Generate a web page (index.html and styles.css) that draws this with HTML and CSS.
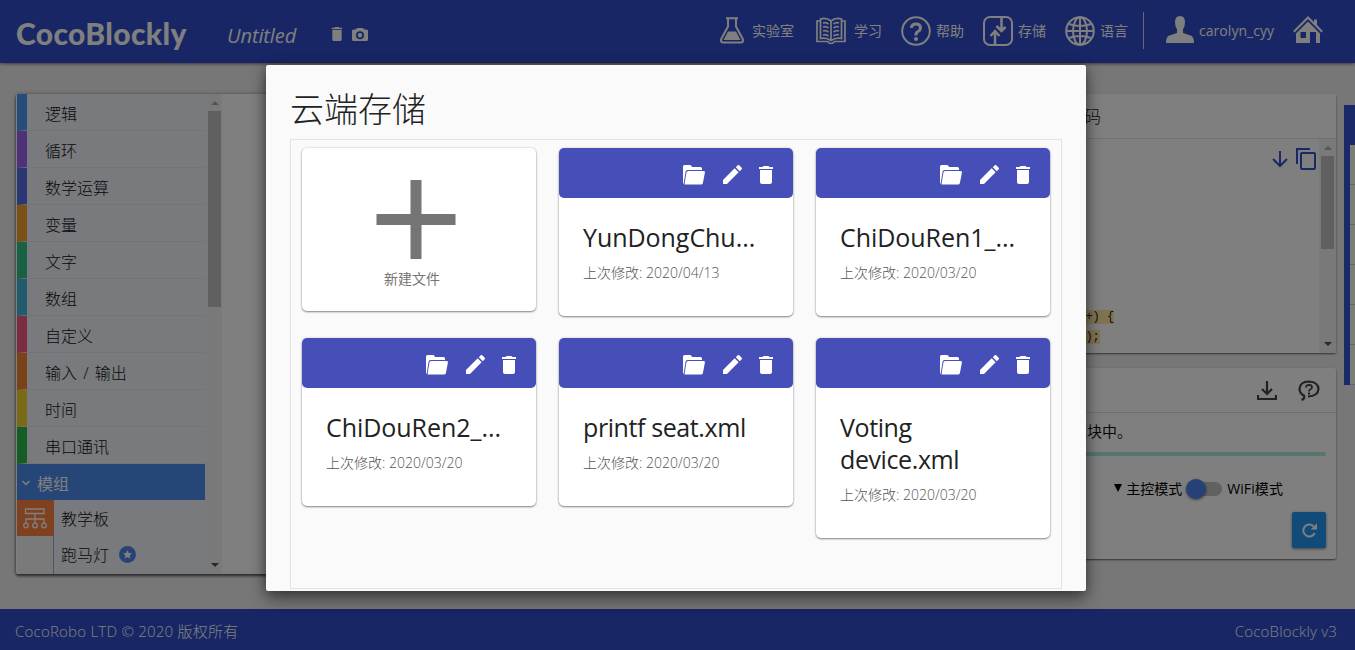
FILE: index.html
```html
<!DOCTYPE html>
<html lang="zh-CN">
<head>
<meta charset="utf-8">
<title>CocoBlockly</title>
<link rel="stylesheet" href="styles.css">
</head>
<body>
<svg class="sprite" width="0" height="0">
  <symbol id="folder" viewBox="0 0 22 20"><path d="M0 19V1.500Q0 0 1.500 0H7Q8.500 0 9 2H17.500Q19 2 19 3.500V5H4.500Q3 5 2.600 6.500L.8 18Z"/><path d="M5 6H20.500Q22.200 6 21.900 7.600L19.900 18Q19.600 19.500 18 19.500H1.500L3.400 7.500Q3.700 6 5 6Z"/></symbol>
  <symbol id="pencil" viewBox="3 3 18 18"><path d="M3 17.250V21h3.750L17.810 9.940l-3.750-3.750L3 17.250zM20.710 7.040a1 1 0 0 0 0-1.410l-2.340-2.340a1 1 0 0 0-1.410 0l-1.830 1.830 3.750 3.750 1.830-1.830z"/></symbol>
  <symbol id="trash" viewBox="5 3 14 18"><path d="M6 19c0 1.100.9 2 2 2h8c1.100 0 2-.9 2-2V7H6v12zM19 4h-3.500l-1-1h-5l-1 1H5v2h14V4z"/></symbol>
</svg>

<header class="topbar">
  <div class="logo">CocoBlockly</div>
  <div class="project-name">Untitled</div>
  <svg class="tool-trash" viewBox="5 3 14 18"><use href="#trash" x="5" y="3" width="14" height="18"/></svg>
  <svg class="tool-camera" viewBox="0 0 16 13"><path fill-rule="evenodd" d="M5 0h6l1.300 1.500H14.500Q16 1.500 16 3V11.500Q16 13 14.500 13H1.500Q0 13 0 11.500V3Q0 1.500 1.500 1.500H3.700ZM8 3.200a4 4 0 1 0 0 8a4 4 0 1 0 0-8ZM8 5a2.200 2.200 0 1 1 0 4.400a2.200 2.200 0 1 1 0-4.400Z"/></svg>
  <nav class="nav">
    <a class="nav-item nav-lab"><svg width="24" height="27" viewBox="0 0 24 27"><g class="line"><path d="M6 1.200H18M8 1.500V9.500L1.500 21.500Q-.3 25.500 3.500 25.500H20.500Q24.300 25.500 22.500 21.500L16 9.500V1.500"/></g><path d="M8 14.500H16L20.500 23H3.500Z"/></svg><span>实验室</span></a>
    <a class="nav-item nav-learn"><svg width="30" height="28" viewBox="0 0 30 28"><g class="line thin"><path d="M4 4H1V24.500H11.500Q13 26.500 15 26.500T18.500 24.500H29V4H26"/><path d="M15 4Q10 0 4.500 2V21.500Q10 20 15 23.500Q20 20 25.500 21.500V2Q20 0 15 4V23M7 6Q10 5 12.500 7M7 10Q10 9 12.500 11M7 14Q10 13 12.500 15M7 18Q10 17 12.500 19M23 6Q20 5 17.500 7M23 10Q20 9 17.500 11M23 14Q20 13 17.500 15M23 18Q20 17 17.500 19"/></g></svg><span>学习</span></a>
    <a class="nav-item nav-help"><svg width="30" height="30" viewBox="0 0 30 30"><g class="line"><circle cx="15" cy="15" r="13.800"/><path class="bold" d="M10.500 12Q10.500 8 15 8T19.500 12Q19.500 14 17 15.500T15 19.500"/></g><circle cx="15" cy="23" r="2"/></svg><span>帮助</span></a>
    <a class="nav-item nav-store"><svg width="30" height="30" viewBox="0 0 30 30"><g class="line"><rect x="1" y="1" width="28" height="28" rx="6"/><path class="arrow" d="M18.500 1V14M13.500 10L18.500 15L22.500 11M12 29V15.500M7.500 20L12 15L16.500 20"/></g></svg><span>存储</span></a>
    <a class="nav-item nav-lang"><svg width="30" height="30" viewBox="0 0 30 30"><g class="line"><circle cx="15" cy="15" r="13.800"/><ellipse cx="15" cy="15" rx="7" ry="13.800"/><path d="M15 1V29M1 15H29M4 8Q15 12 26 8M4 22Q15 18 26 22"/></g></svg><span>语言</span></a>
    <i class="divider"></i>
    <a class="nav-item nav-user"><svg width="28" height="27" viewBox="0 0 28 27"><path d="M14 0Q19 0 19 6Q19 11 17 13.500V17L24.500 19.500Q28 20.500 28 27H0Q0 20.500 3.500 19.500L11 17V13.500Q9 11 9 6Q9 0 14 0Z"/></svg><span>carolyn_cyy</span></a>
    <a class="nav-item nav-home"><svg width="30" height="27" viewBox="0 0 30 27"><path d="M15 0L21 6V3.500H24V9L30 15L28.500 16.500L15 3L1.500 16.500L0 15Z"/><path fill-rule="evenodd" d="M15 5.500L27 17.500V27H23V16H17V27H3V17.500ZM7.500 16V22H13V16Z"/></svg></a>
  </nav>
</header>

<main class="stage">
  <section class="workspace">
    <div class="toolbox">
      <div class="cat logic">逻辑</div>
      <div class="cat loop">循环</div>
      <div class="cat math">数学运算</div>
      <div class="cat vars">变量</div>
      <div class="cat text">文字</div>
      <div class="cat array">数组</div>
      <div class="cat custom">自定义</div>
      <div class="cat io">输入 / 输出</div>
      <div class="cat time">时间</div>
      <div class="cat serial">串口通讯</div>
      <div class="cat-open"><svg width="8" height="6" viewBox="0 0 8 6"><path d="M.5 1L4 4.500L7.500 1"/></svg>模组</div>
      <div class="sub"><span class="sub-icon"><svg width="24" height="21" viewBox="0 0 24 21"><path d="M2.500 1H21V5.500H2.500ZM12 5.500V15M3 15V11H21V15"/><circle cx="3" cy="17.500" r="2.300"/><circle cx="12" cy="17.500" r="2.300"/><circle cx="21" cy="17.500" r="2.300"/></svg></span><span class="sub-name">教学板</span></div>
      <div class="sub last"><span class="sub-line"></span>跑马灯<svg class="star" width="17" height="17" viewBox="0 0 17 17"><circle cx="8.500" cy="8.500" r="8.500"/><path d="M8.500 4L9.800 7L13 7.300L10.600 9.400L11.300 12.600L8.500 10.900L5.700 12.600L6.400 9.400L4 7.300L7.200 7Z"/></svg></div>
    </div>
    <div class="scroll scroll-left"><i class="up"></i><i class="thumb"></i><i class="down"></i></div>
  </section>
  <div class="side">
    <section class="panel code-panel">
      <div class="panel-head code-head">代码</div>
      <div class="code-body">
        <div class="code">
          <div class="code-tools"><svg width="16" height="17" viewBox="0 0 16 17"><path d="M8 0V15M1 8L8 15L15 8"/></svg><svg width="20" height="22" viewBox="0 0 20 22"><path d="M1 16V1H14"/><rect x="5" y="5" width="14" height="16" rx="1"/></svg></div>
          <div class="code-lines"><div><mark>i++) {</mark></div><div><mark>i]);</mark></div></div>
        </div>
        <div class="scroll scroll-code"><i class="up"></i><i class="thumb"></i><i class="down"></i></div>
      </div>
    </section>
    <section class="panel upload-panel">
      <div class="panel-head upload-head">
        <svg width="20" height="20" viewBox="0 0 20 20"><path d="M10 1V14M5 9L10 14L15 9M1 15V19H19V15"/></svg>
        <svg width="22" height="21" viewBox="0 0 22 21"><path d="M3.500 20Q7 19 6 15.500Q1.500 13.500 1.500 9Q2 1.500 11 1.500Q20 2 20.500 9Q20 16 10 16.500"/><path class="q" d="M8 7.500Q8 4.800 11 4.800T14 7.300Q14 8.500 12.500 9.300T11 11.500"/><circle cx="11" cy="13.600" r="1"/></svg>
      </div>
      <div class="upload-body">
        <p class="hint">请将程序上传到模块中。</p>
        <div class="progress"></div>
        <div class="mode"><i class="caret"></i><span>主控模式</span><i class="toggle"><i class="knob"></i></i><span class="wifi">WiFi模式</span></div>
        <div class="refresh"><svg width="15" height="15" viewBox="0 0 15 15"><path d="M12.800 10A6 6 0 1 1 11.500 3.200"/><path class="tip" d="M15 .3V6.600H8.500Z"/></svg></div>
      </div>
    </section>
  </div>
  <aside class="drawer"><i></i><i></i><i></i><i></i><i></i><i></i></aside>
</main>

<footer class="footer"><span class="copyright">CocoRobo LTD © 2020 版权所有</span><span class="version">CocoBlockly v3</span></footer>

<div class="overlay">
  <div class="modal">
    <h1>云端存储</h1>
    <div class="files">
      <article class="card new-card"><svg width="80" height="80" viewBox="0 0 80 80"><path d="M34.500 0H45.500V34H79.500V45H45.500V79H34.500V45H.5V34H34.500Z"/></svg><span>新建文件</span></article>
      <article class="card"><div class="card-bar"><svg class="i-folder"><use href="#folder"/></svg><svg class="i-pencil"><use href="#pencil"/></svg><svg class="i-trash"><use href="#trash"/></svg></div><div class="card-body"><h2 class="clipped">YunDongChu...</h2><p>上次修改: 2020/04/13</p></div></article>
      <article class="card"><div class="card-bar"><svg class="i-folder"><use href="#folder"/></svg><svg class="i-pencil"><use href="#pencil"/></svg><svg class="i-trash"><use href="#trash"/></svg></div><div class="card-body"><h2 class="clipped">ChiDouRen1_...</h2><p>上次修改: 2020/03/20</p></div></article>
      <article class="card"><div class="card-bar"><svg class="i-folder"><use href="#folder"/></svg><svg class="i-pencil"><use href="#pencil"/></svg><svg class="i-trash"><use href="#trash"/></svg></div><div class="card-body"><h2 class="clipped">ChiDouRen2_...</h2><p>上次修改: 2020/03/20</p></div></article>
      <article class="card"><div class="card-bar"><svg class="i-folder"><use href="#folder"/></svg><svg class="i-pencil"><use href="#pencil"/></svg><svg class="i-trash"><use href="#trash"/></svg></div><div class="card-body"><h2>printf seat.xml</h2><p>上次修改: 2020/03/20</p></div></article>
      <article class="card"><div class="card-bar"><svg class="i-folder"><use href="#folder"/></svg><svg class="i-pencil"><use href="#pencil"/></svg><svg class="i-trash"><use href="#trash"/></svg></div><div class="card-body"><h2>Voting<br>device.xml</h2><p>上次修改: 2020/03/20</p></div></article>
    </div>
  </div>
</div>
</body>
</html>
```
FILE: styles.css
```css
* { box-sizing: border-box; }
body {
  margin: 0; height: 650px; overflow: hidden;
  display: flex; flex-direction: column;
  background: #efefef; color: #111;
  font-family: "Open Sans", "Noto Sans CJK SC", sans-serif; font-size: 16px;
}
svg { display: block; flex: none; }
.sprite { position: absolute; }

/* top bar */
.topbar {
  flex: none; height: 63px; padding: 0 33px 0 15px;
  display: flex; align-items: center;
  background: #304dcb; color: #fff; fill: #fff;
  box-shadow: 0 1px 3px rgba(0,0,0,.5);
}
.logo { width: 212px; padding: 3px 0 0 1px; font: 900 30px/36px Lato, sans-serif; letter-spacing: .35px; }
.project-name { width: 104px; padding-top: 8px; font-size: 20px; font-style: italic; letter-spacing: -.1px; }
.tool-trash { width: 12px; height: 14px; margin: 5px 9px 0 0; }
.tool-camera { width: 16px; height: 13px; margin-top: 5px; }
.nav { margin: 0 -1px 2px auto; display: flex; align-items: center; font-size: 14px; line-height: 20px; }
.nav-item { display: flex; align-items: center; gap: 5px; height: 30px; }
.line { fill: none; stroke: #fff; stroke-width: 2; }
.line.thin { stroke-width: 1.700; }
.line .bold { stroke-width: 3; }
.line .arrow { stroke-width: 2.500; }
.nav-lab { gap: 8px; margin-right: 22px; }
.nav-learn { gap: 8px; margin-right: 19px; }
.nav-help, .nav-store { margin-right: 19px; }
.nav-lang { margin-right: 15px; }
.divider { width: 1px; height: 37px; background: #d0d4e0; margin-right: 22px; }
.nav-user { margin-right: 19px; }
.nav-user svg, .nav-home svg { margin-bottom: 2px; }
.nav-user span { width: 75px; letter-spacing: .05px; }

/* work area */
.stage { position: relative; flex: 1; display: flex; justify-content: space-between; padding: 31px 19px 0 16px; }
.workspace {
  width: 700px; height: 480px; padding-left: 1px; display: flex; overflow: hidden;
  background: #fff; border-radius: 2px; box-shadow: 0 2px 3px rgba(0,0,0,.6), 0 0 4px rgba(0,0,0,.3);
}
.toolbox { width: 188px; flex: none; background: #f2f4fb; }
.cat {
  height: 37px; padding-left: 18px; line-height: 40px; word-spacing: 2px;
  border-left: 10px solid; border-bottom: 1px solid #e7e8ec; font-weight: 300;
}
.logic { border-left-color: #4c9af5; }
.loop { border-left-color: #9f62f5; }
.math { border-left-color: #566de8; }
.vars { border-left-color: #f7a22c; }
.text { border-left-color: #33c28b; }
.array { border-left-color: #40b9da; }
.custom { border-left-color: #f55b7d; }
.io { border-left-color: #f6852f; }
.time { border-left-color: #f5d42b; }
.serial { border-left-color: #28bd4b; }
.cat-open { height: 36px; display: flex; align-items: center; gap: 7px; padding: 1px 0 0 5px; background: #4c8cee; color: #fff; }
.cat-open path { fill: none; stroke: #fff; stroke-width: 1.500; }
.sub { height: 36px; display: flex; align-items: center; gap: 7px; line-height: 36px; font-weight: 300; }
.sub.last { height: 38px; }
.sub-name { padding-top: 2px; }
.sub-icon { width: 37px; height: 36px; padding: 8px 6px; background: #ff8340; }
.sub-icon path, .sub-icon circle { fill: none; stroke: #fff; stroke-width: 1.300; }
.sub-line { width: 37px; height: 38px; border-right: 1px solid #95a5e0; background: #f4f4f6; }
.star { margin: 0 0 2px 3px; fill: #5285eb; }
.star path { fill: #fff; }

.scroll { width: 17px; flex: none; display: flex; flex-direction: column; align-items: center; background: #f3f3f3; }
.up { margin-top: 7px; border: solid transparent; border-width: 0 4px 4px; border-bottom-color: #aaa; }
.down { margin: auto 0 7px; border: solid transparent; border-width: 4px 4px 0; border-top-color: #505050; }
.thumb { width: 13px; margin-top: 6px; background: #c1c1c1; }
.scroll-left { padding-left: 2px; }
.scroll-left .thumb { height: 196px; }
.scroll-code .thumb { height: 93px; }

.side { width: 420px; display: flex; flex-direction: column; gap: 15px; }
.panel { background: #fff; border-radius: 2px; box-shadow: 0 1px 2px rgba(0,0,0,.6); }
.code-panel { height: 259px; }
.code-head { height: 45px; padding-left: 151px; line-height: 45px; font-size: 17px; font-weight: 300; border-bottom: 1px solid #e0e0e0; }
.code-body { height: 214px; display: flex; }
.code { flex: 1; display: flex; flex-direction: column; justify-content: space-between; padding: 9px 3px 6px 0; }
.code-tools { display: flex; justify-content: flex-end; align-items: center; gap: 8px; }
.code-tools path, .code-tools rect { fill: none; stroke: #3450cd; stroke-width: 2; }
.code-lines { padding-left: 155px; font: 12px/20px "Liberation Mono", monospace; }
.code-lines mark { background: #ffe7a0; color: #222; }
.upload-panel { height: 191px; }
.upload-head { height: 45px; display: flex; justify-content: flex-end; align-items: center; gap: 21px; padding-right: 16px; border-bottom: 1px solid #ddd; }
.upload-head path { fill: none; stroke: #444; stroke-width: 2.200; }
.upload-head .q { stroke-width: 1.800; }
.upload-body { padding: 7px 10px 0; }
.hint { margin: 0 0 9px; padding-left: 41px; line-height: 23px; font-size: 15px; }
.progress { height: 4px; border-radius: 2px; background: #acebe0; }
.mode { height: 24px; margin-top: 20px; padding-right: 43px; display: flex; align-items: center; justify-content: flex-end; gap: 4px; font-size: 14px; color: #000; }
.caret { border: solid transparent; border-width: 8px 4px 0; border-top-color: #000; margin-bottom: 1px; }
.toggle { width: 36px; height: 14px; border-radius: 7px; background: #c3c3c3; margin-top: 2px; }
.knob { display: block; width: 20px; height: 20px; margin-top: -3px; border-radius: 50%; background: #4a83ed; box-shadow: 0 1px 3px rgba(0,0,0,.5); }
.wifi { padding-left: 1px; letter-spacing: .1px; }
.refresh { width: 34px; height: 36px; margin: 12px 0 0 auto; display: flex; align-items: center; justify-content: center; border-radius: 2px; background: #2196f3; box-shadow: 0 1px 3px rgba(0,0,0,.5); }
.refresh path { fill: none; stroke: #fff; stroke-width: 2; }
.refresh .tip { fill: #fff; stroke: none; }
.drawer { position: absolute; right: 0; top: 42px; width: 11px; height: 280px; padding: 40px 0 0 6px; background: #3452ce; }
.drawer i { display: block; height: 40px; background: #f8f8f8; border-bottom: 1px solid #c8c8c8; }

.footer { flex: none; height: 41px; padding: 2px 18px 0 15px; display: flex; justify-content: space-between; align-items: center; background: #304dcb; color: #fff; font-size: 15px; font-weight: 300; }
.copyright { letter-spacing: .23px; }
.version { letter-spacing: .18px; }

/* storage dialog */
.overlay { position: absolute; inset: 0; background: rgba(0,0,0,.5); display: flex; justify-content: center; align-items: flex-start; padding: 65px 3px 0 0; }
.modal { width: 820px; height: 526px; padding: 24px 24px 0; background: #fafafa; border-radius: 2px; box-shadow: 0 8px 17px rgba(0,0,0,.45), 0 0 10px rgba(0,0,0,.3); }
h1 { margin: 0; height: 50px; line-height: 40px; font-size: 34px; font-weight: 300; color: #222; }
.files { width: 772px; height: 450px; padding: 8px 11px; border: 1px solid #e3e3e3; display: grid; grid-template-columns: repeat(3, 234px); gap: 22px 23px; align-items: start; align-content: start; }
.card { background: #fff; border-radius: 5px; box-shadow: 0 1px 2px rgba(0,0,0,.45), 0 0 3px rgba(0,0,0,.12); }
.new-card { height: 163px; padding: 32px 14px 0 0; display: flex; flex-direction: column; align-items: center; gap: 8px; fill: #757575; color: #757575; font-size: 14px; line-height: 22px; }
.new-card svg { margin-left: 7px; }
.card-bar { height: 50px; padding: 3px 19px 0 0; display: flex; align-items: center; justify-content: flex-end; border-radius: 5px; background: #464fb7; fill: #fff; }
.i-folder { width: 22px; height: 20px; margin-right: 18px; }
.i-pencil { width: 19px; height: 19px; margin-right: 16px; }
.i-trash { width: 16px; height: 18px; }
.card-body { padding: 23px 24px 32px; }
h2 { margin: 0; font-size: 25px; line-height: 32px; font-weight: 400; letter-spacing: -.4px; color: #222; white-space: nowrap; }
h2.clipped { letter-spacing: -.05px; }
.card-body p { margin: 9px 0 0; font-size: 14px; line-height: 22px; font-weight: 300; color: #555; letter-spacing: 0; }
```
